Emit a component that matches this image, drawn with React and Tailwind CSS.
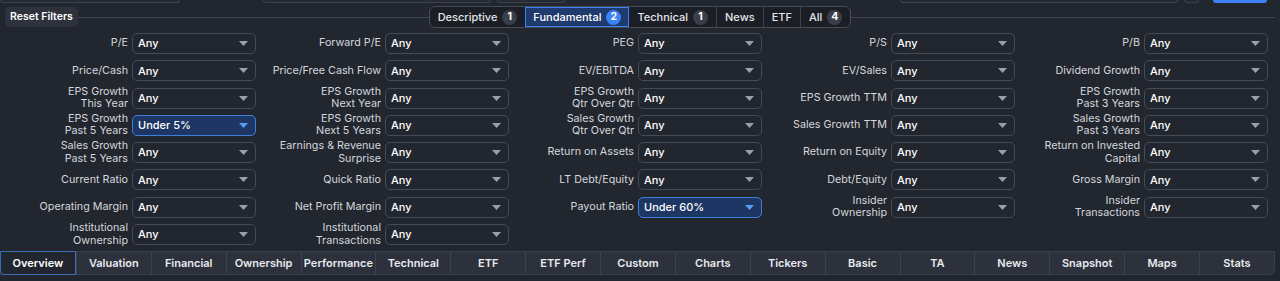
const rows = [
  [["P/E"], ["Forward P/E"], ["PEG"], ["P/S"], ["P/B"]],
  [["Price/Cash"], ["Price/Free Cash Flow"], ["EV/EBITDA"], ["EV/Sales"], ["Dividend Growth"]],
  [["EPS Growth", "This Year"], ["EPS Growth", "Next Year"], ["EPS Growth", "Qtr Over Qtr"], ["EPS Growth TTM"], ["EPS Growth", "Past 3 Years"]],
  [["EPS Growth", "Past 5 Years", "Under 5%"], ["EPS Growth", "Next 5 Years"], ["Sales Growth", "Qtr Over Qtr"], ["Sales Growth TTM"], ["Sales Growth", "Past 3 Years"]],
  [["Sales Growth", "Past 5 Years"], ["Earnings & Revenue", "Surprise"], ["Return on Assets"], ["Return on Equity"], ["Return on Invested", "Capital"]],
  [["Current Ratio"], ["Quick Ratio"], ["LT Debt/Equity"], ["Debt/Equity"], ["Gross Margin"]],
  [["Operating Margin"], ["Net Profit Margin"], ["Payout Ratio", null, "Under 60%"], ["Insider", "Ownership"], ["Insider", "Transactions"]],
  [["Institutional", "Ownership"], ["Institutional", "Transactions"], null, null, null],
]

const groups = [
  { name: "Descriptive", count: 1 },
  { name: "Fundamental", count: 2, active: true },
  { name: "Technical", count: 1 },
  { name: "News" },
  { name: "ETF" },
  { name: "All", count: 4 },
]

const views = ["Overview", "Valuation", "Financial", "Ownership", "Performance", "Technical", "ETF", "ETF Perf", "Custom", "Charts", "Tickers", "Basic", "TA", "News", "Snapshot", "Maps", "Stats"]

function Caret({ blue }) {
  return (
    <svg width="9" height="5" viewBox="0 0 9 5" className={blue ? "fill-[#5b9cf2]" : "fill-[#9aa0ab]"}>
      <path d="M0 0h9L4.5 5z" />
    </svg>
  )
}

function Filter({ item }) {
  if (!item) return <div />
  const [l1, l2, value] = item
  const set = Boolean(value)
  return (
    <div className="flex items-center gap-1 h-[21px]">
      <div className="flex-1 text-right text-[10.75px] leading-[12.5px] text-[#d4d7dd]">
        <div>{l1}</div>
        {l2 && <div>{l2}</div>}
      </div>
      <div
        className={
          "w-[124px] h-[21px] rounded-[5px] border flex items-center justify-between pl-[5px] pr-[7px] text-[11px] font-medium " +
          (set ? "bg-[#1e3664] border-[#3f7fd9] text-white" : "bg-[#22262e] border-[#454a57] text-white")
        }
      >
        <span>{value || "Any"}</span>
        <Caret blue={set} />
      </div>
    </div>
  )
}

export default function App() {
  return (
    <div className="w-[1280px] h-[281px] overflow-hidden bg-[#22262e] font-['Inter',sans-serif]">
      <div className="flex h-[3px]">
        <div className="w-[180px] border-b border-x border-[#3c414d] rounded-b bg-[#262a33]" />
        <div className="ml-[83px] w-[228px] border-b border-x border-[#3c414d] rounded-b bg-[#262a33]" />
        <div className="ml-[6px] w-[68px] border-b border-x border-[#3c414d] rounded-b bg-[#262a33]" />
        <div className="ml-[335px] w-[278px] border-b border-x border-[#3c414d] rounded-b bg-[#262a33]" />
        <div className="ml-[6px] w-[15px] border-b border-x border-[#3c414d] rounded-b bg-[#262a33]" />
        <div className="ml-[14px] w-[54px] rounded-b bg-[#3b82f6]" />
      </div>

      <div className="grid grid-cols-[1fr_auto_1fr] items-center h-[22px] mt-[3px] pl-[5px] pr-[5px]">
        <div className="flex items-center">
          <div className="h-[20px] px-[5px] flex items-center rounded-[5px] bg-[#2e323c] text-[10.5px] font-semibold text-white">
            Reset Filters
          </div>
          <div className="flex-1 h-px bg-[#3e4350]" />
        </div>
        <div className="flex h-[22px] rounded-[6px] border border-[#464b58] bg-[#1b1e25] overflow-hidden">
          {groups.map((g, i) => (
            <div
              key={g.name}
              className={
                "flex items-center gap-[5px] px-[8px] text-[11px] font-medium " +
                (g.active
                  ? "bg-[#1f3a6c] text-white outline outline-[#3b82f6] -outline-offset-1"
                  : "text-[#e3e5e9]") +
                (i > 0 && !g.active && !groups[i - 1].active ? " border-l border-[#3a3f4b]" : "")
              }
            >
              <span>{g.name}</span>
              {g.count && (
                <span
                  className={
                    "w-[15px] h-[15px] rounded-full flex items-center justify-center text-[10.5px] font-bold text-white " +
                    (g.active ? "bg-[#3b82f6]" : "bg-[#3a3e49]")
                  }
                >
                  {g.count}
                </span>
              )}
            </div>
          ))}
        </div>
        <div className="h-px bg-[#3e4350]" />
      </div>

      <div className="grid grid-cols-5 gap-x-[1px] gap-y-[6.3px] pl-[4px] pr-[12px] mt-[5px]">
        {rows.map((r, i) => r.map((item, j) => <Filter key={i + "-" + j} item={item} />))}
      </div>

      <div className="mt-[6px] w-[1275px] h-[24px] flex bg-[#2d313c] border-y border-r border-[#3a3f4b] rounded-br-[6px]">
        {views.map((v, i) => (
          <div
            key={v}
            className={
              "flex-1 flex items-center justify-center text-[11px] font-semibold " +
              (i === 0
                ? "bg-[#22262e] border border-[#3b6fb5] rounded-bl-[4px] -my-px text-white"
                : "text-[#e8eaee] border-l border-[#3d4250]")
            }
          >
            {v}
          </div>
        ))}
      </div>
    </div>
  )
}
